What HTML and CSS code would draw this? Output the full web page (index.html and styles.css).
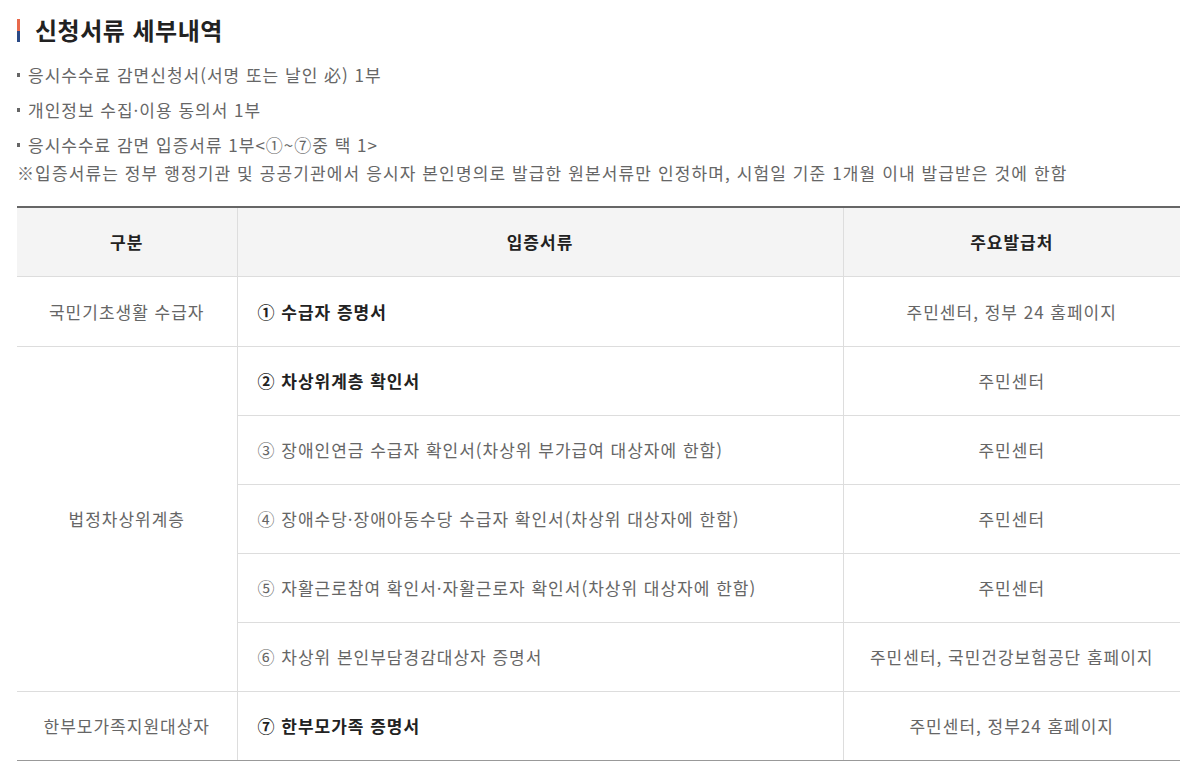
FILE: index.html
```html
<!DOCTYPE html>
<html lang="ko">
<head>
<meta charset="utf-8">
<link rel="stylesheet" href="styles.css">
</head>
<body>
<div class="wrap">
  <h2 class="title"><span class="bar"></span><span>신청서류 세부내역</span></h2>
  <ul class="list">
    <li>응시수수료 감면신청서(서명 또는 날인 必) 1부</li>
    <li>개인정보 수집·이용 동의서 1부</li>
    <li>응시수수료 감면 입증서류 1부&lt;①~⑦중 택 1&gt;</li>
  </ul>
  <p class="note">※입증서류는 정부 행정기관 및 공공기관에서 응시자 본인명의로 발급한 원본서류만 인정하며, 시험일 기준 1개월 이내 발급받은 것에 한함</p>
  <table class="tbl">
    <colgroup>
      <col class="c1"><col class="c2"><col class="c3">
    </colgroup>
    <thead>
      <tr><th>구분</th><th>입증서류</th><th>주요발급처</th></tr>
    </thead>
    <tbody>
      <tr class="first"><td class="cat">국민기초생활 수급자</td><td class="doc strong">① 수급자 증명서</td><td class="org">주민센터, 정부 24 홈페이지</td></tr>
      <tr><td class="cat" rowspan="5">법정차상위계층</td><td class="doc strong">② 차상위계층 확인서</td><td class="org">주민센터</td></tr>
      <tr><td class="doc">③ 장애인연금 수급자 확인서(차상위 부가급여 대상자에 한함)</td><td class="org">주민센터</td></tr>
      <tr><td class="doc">④ 장애수당·장애아동수당 수급자 확인서(차상위 대상자에 한함)</td><td class="org">주민센터</td></tr>
      <tr><td class="doc">⑤ 자활근로참여 확인서·자활근로자 확인서(차상위 대상자에 한함)</td><td class="org">주민센터</td></tr>
      <tr><td class="doc">⑥ 차상위 본인부담경감대상자 증명서</td><td class="org">주민센터, 국민건강보험공단 홈페이지</td></tr>
      <tr class="last"><td class="cat">한부모가족지원대상자</td><td class="doc strong">⑦ 한부모가족 증명서</td><td class="org">주민센터, 정부24 홈페이지</td></tr>
    </tbody>
  </table>
</div>
</body>
</html>
```

FILE: styles.css
```css
* { box-sizing: border-box; }
html, body { margin: 0; padding: 0; background: #fff; }
body {
  font-family: "Noto Sans CJK KR", "Noto Sans", sans-serif;
  color: #666;
  letter-spacing: 1px;
}
.wrap { padding: 15px 15px 0 17px; width: 1195px; }
.title {
  display: flex;
  align-items: center;
  gap: 15px;
  margin: 0;
  font-size: 24px;
  font-weight: 700;
  line-height: 30px;
  color: #222;
  letter-spacing: 0.5px;
}
.bar {
  width: 3px;
  height: 23px;
  background: linear-gradient(#e8694c 50%, #2b4a86 50%);
}
.list {
  list-style: none;
  margin: 12px 0 0;
  padding: 0;
}
.list li {
  display: flex;
  align-items: center;
  gap: 8px;
  font-size: 17px;
  line-height: 35px;
  color: #666;
}
.list li::before {
  content: "";
  width: 3px;
  height: 4px;
  background: #666;
}
.note {
  margin: 0;
  font-size: 17px;
  line-height: 21px;
  color: #666;
  letter-spacing: 1.12px;
}
.tbl {
  margin-top: 23px;
  width: 1163px;
  border-collapse: collapse;
  table-layout: fixed;
  border-top: 2px solid #666;
  border-bottom: 1px solid #999;
  font-size: 17px;
}
.c1 { width: 220px; }
.c2 { width: 606px; }
.c3 { width: 337px; }
.tbl th {
  height: 69px;
  background: #f4f4f4;
  color: #222;
  font-weight: 700;
  border-bottom: 1px solid #ddd;
  border-left: 1px solid #ddd;
  padding: 0;
}
.tbl td {
  height: 69px;
  border-bottom: 1px solid #ddd;
  border-left: 1px solid #ddd;
  padding: 0;
  color: #666;
}
.tbl tr.first td { height: 70px; }
.tbl th:first-child, .tbl td.cat { border-left: none; }
.tbl tr.last td { border-bottom: 1px solid #999; }
.cat { text-align: center; }
.doc { text-align: left; padding-left: 20px !important; }
.doc.strong { color: #222; font-weight: 700; }
.org { text-align: center; }
```
